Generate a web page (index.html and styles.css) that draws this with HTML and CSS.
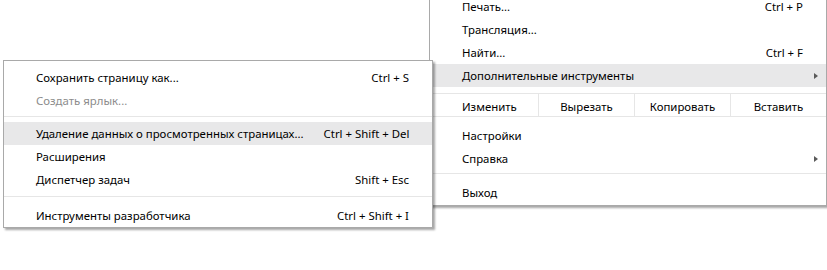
FILE: index.html
```html
<!DOCTYPE html>
<html lang="ru">
<head>
<meta charset="utf-8">
<link rel="stylesheet" href="styles.css">
</head>
<body>
<div class="menu main">
  <div class="item"><span class="label">Печать...</span><span class="key">Ctrl + P</span></div>
  <div class="item"><span class="label">Трансляция...</span></div>
  <div class="item"><span class="label">Найти...</span><span class="key">Ctrl + F</span></div>
  <div class="item hl"><span class="label">Дополнительные инструменты</span><span class="arrow"></span></div>
  <div class="edit">
    <div class="ecell first">Изменить</div>
    <div class="ecell">Вырезать</div>
    <div class="ecell">Копировать</div>
    <div class="ecell">Вставить</div>
  </div>
  <div class="item"><span class="label">Настройки</span></div>
  <div class="item"><span class="label">Справка</span><span class="arrow"></span></div>
  <div class="sep"></div>
  <div class="item"><span class="label">Выход</span></div>
</div>

<div class="menu sub">
  <div class="item"><span class="label">Сохранить страницу как...</span><span class="key">Ctrl + S</span></div>
  <div class="item disabled"><span class="label">Создать ярлык...</span></div>
  <div class="sep"></div>
  <div class="item hl"><span class="label">Удаление данных о просмотренных страницах...</span><span class="key">Ctrl + Shift + Del</span></div>
  <div class="item"><span class="label">Расширения</span></div>
  <div class="item"><span class="label">Диспетчер задач</span><span class="key">Shift + Esc</span></div>
  <div class="sep sep2"></div>
  <div class="item"><span class="label">Инструменты разработчика</span><span class="key">Ctrl + Shift + I</span></div>
</div>
</body>
</html>
```
FILE: styles.css
```css
html, body {
  margin: 0;
  padding: 0;
  background: #ffffff;
  width: 827px;
  height: 270px;
  overflow: hidden;
  font-family: "Noto Sans", "Open Sans", sans-serif;
  font-size: 11.4px;
  color: #000000;
}

.menu {
  position: absolute;
  background: #ffffff;
  border: 1px solid #a9a9a9;
  box-shadow: 2px 2px 2px rgba(0, 0, 0, 0.35);
  box-sizing: border-box;
}

.main {
  left: 429px;
  top: -5px;
  width: 398px;
  height: 211px;
  border-top: none;
}

.sub {
  left: 3px;
  top: 60px;
  width: 430px;
  height: 168px;
  padding-top: 5px;
}

.item {
  height: 23px;
  display: flex;
  align-items: center;
  padding: 0 23px 0 32px;
  white-space: nowrap;
}

.item.hl {
  background: #e8e8e9;
}

.item.disabled {
  color: #8c8c8c;
}

.label {
  flex: 1;
}

.key {
  margin-left: 20px;
}

.arrow {
  width: 0;
  height: 0;
  border-top: 3.5px solid transparent;
  border-bottom: 3.5px solid transparent;
  border-left: 4px solid #5a5a5a;
  margin-right: -15px;
}

.sep {
  height: 1px;
  background: #e6e6e6;
  margin: 3px 0 7px;
}

.sub .sep {
  margin: 4px 0 5px;
}

.sub .sep2 {
  margin: 5px 0 7px;
}

.edit {
  display: grid;
  grid-template-columns: 1fr 96px 96px 96px;
  height: 24px;
  border-top: 1px solid #e6e6e6;
  border-bottom: 1px solid #e6e6e6;
  margin: 6px 0 7px -1px;
  box-sizing: border-box;
}

.ecell {
  display: flex;
  align-items: center;
  justify-content: center;
  border-left: 1px solid #e6e6e6;
  padding-top: 2px;
}

.ecell.first {
  justify-content: flex-start;
  padding-left: 33px;
  border-left: none;
}
```
